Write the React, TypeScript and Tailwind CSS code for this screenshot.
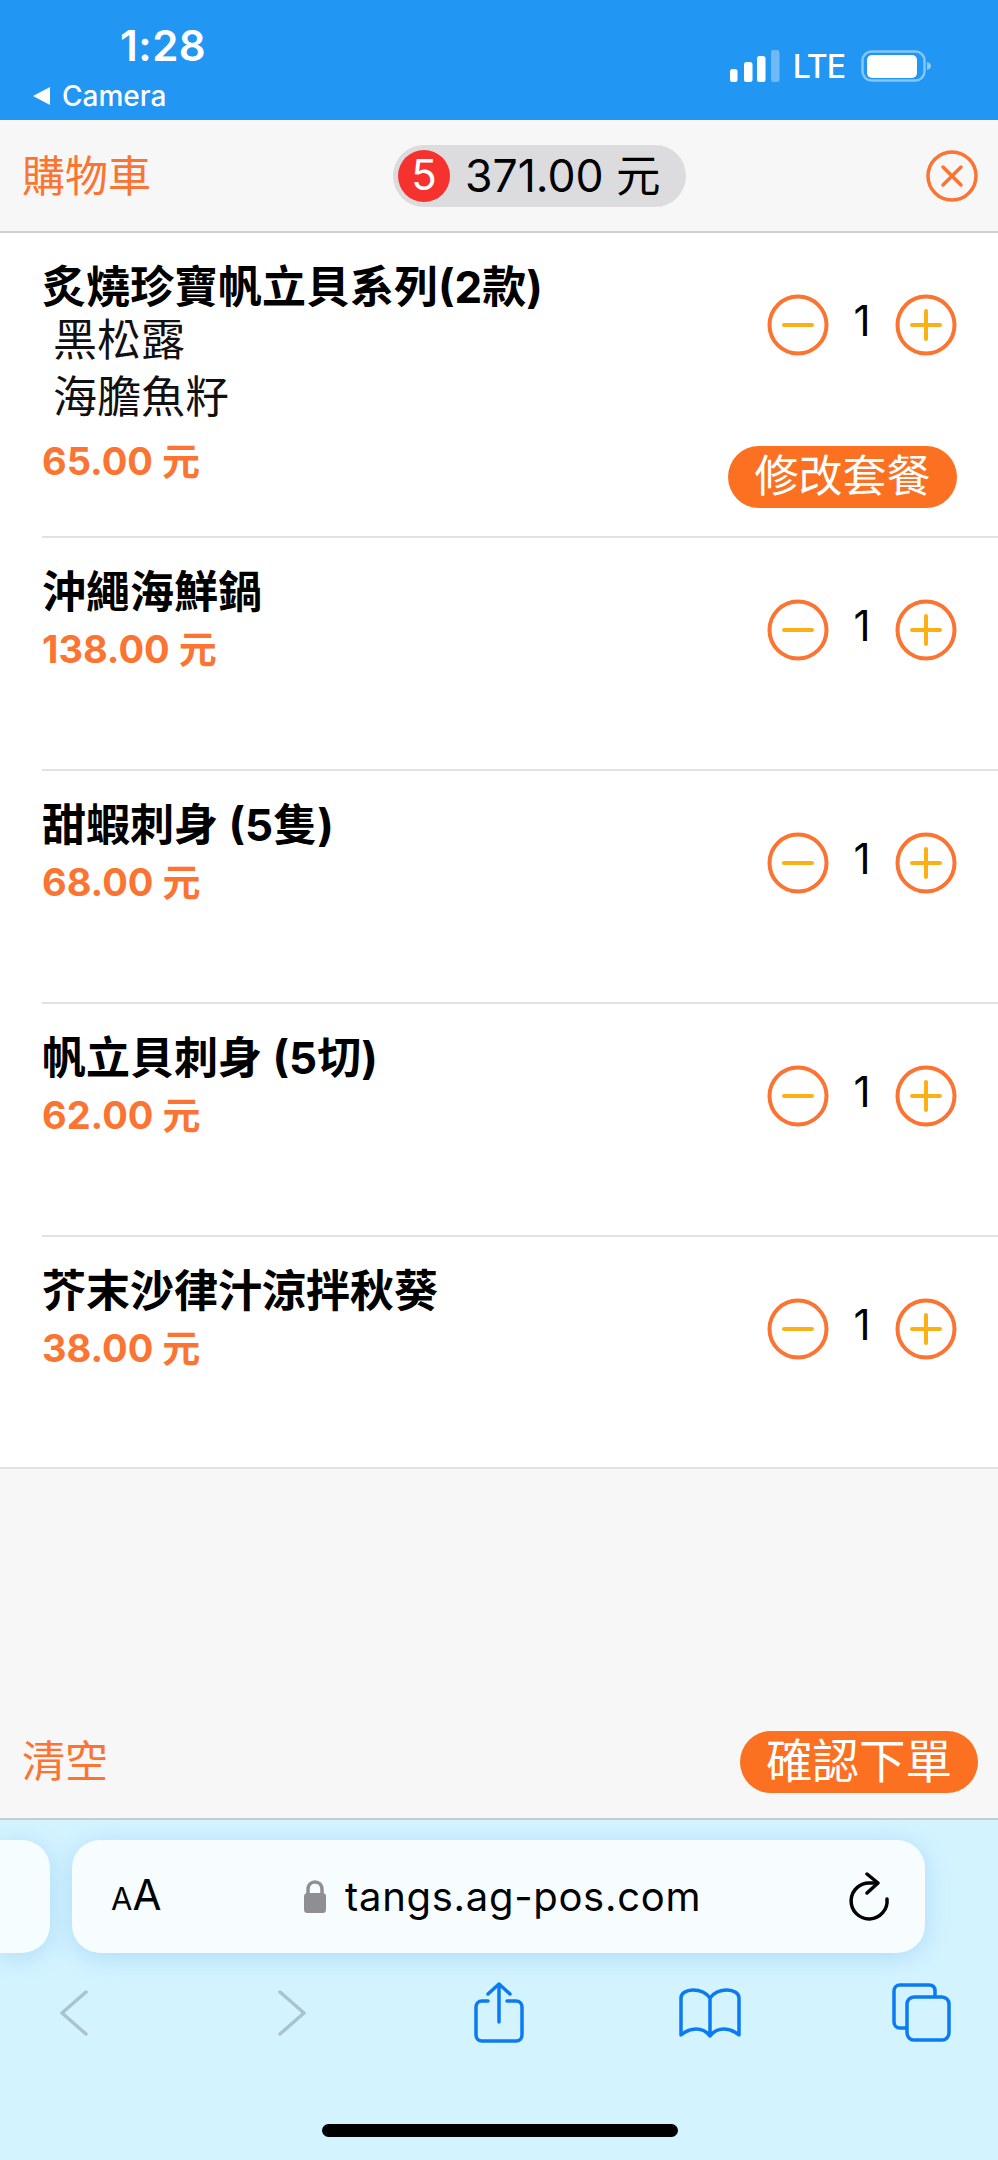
const CJK = "font-['Inter','Noto_Sans_CJK_TC',sans-serif]";

const items = [
  { name: "炙燒珍寶帆立貝系列(2款)", price: "65.00 元", opts: ["黑松露", "海膽魚籽"], h: "h-[305px]" },
  { name: "沖繩海鮮鍋", price: "138.00 元", opts: [], h: "h-[233px]" },
  { name: "甜蝦刺身 (5隻)", price: "68.00 元", opts: [], h: "h-[233px]" },
  { name: "帆立貝刺身 (5切)", price: "62.00 元", opts: [], h: "h-[233px]" },
  { name: "芥末沙律汁涼拌秋葵", price: "38.00 元", opts: [], h: "h-[232px]" },
];

function Round({ plus }: { plus?: boolean }) {
  return (
    <svg width="62" height="62" viewBox="0 0 62 62" fill="none">
      <circle cx="31" cy="31" r="28.5" stroke="#fb7431" strokeWidth="4" />
      <path d={plus ? "M17 31H45M31 17V45" : "M17 31H45"} stroke="#fbb116" strokeWidth="4" strokeLinecap="round" />
    </svg>
  );
}

function Row({ item, last }: { item: (typeof items)[number]; last: boolean }) {
  return (
    <div className={`flex ${item.h} pr-[41px] pt-[29px] border-b-2 border-[#e2e2e2] ${last ? "-ml-[42px] pl-[42px]" : ""}`}>
      <div className="flex-1">
        <div className="text-[44px] leading-[50px] font-bold text-black whitespace-nowrap">{item.name}</div>
        {item.opts.map((o) => (
          <div key={o} className="pl-[11px] text-[44px] leading-[57px] text-[#111]">{o}</div>
        ))}
        <div className={`text-[38px] leading-[50px] font-bold text-[#fb7431] ${item.opts.length ? "mt-[10px]" : "mt-[7px]"}`}>{item.price}</div>
      </div>
      <div className="flex flex-col items-end">
        <div className="flex items-center mt-[32px]">
          <Round />
          <div className="w-[66px] text-center text-[42px] leading-[50px] -mt-[9px] text-black">1</div>
          <Round plus />
        </div>
        {item.opts.length > 0 && (
          <div className="mt-[90px] h-[62px] w-[229px] rounded-full bg-[#fb7021] text-white text-[44px] leading-[60px] text-center">修改套餐</div>
        )}
      </div>
    </div>
  );
}

export default function App() {
  return (
    <div className={`w-[998px] h-[2160px] flex flex-col overflow-hidden bg-[#f7f7f8] ${CJK}`}>
      <div className="h-[120px] bg-[#2196f3] flex justify-between text-white">
        <div className="pl-[32px] flex flex-col">
          <div className="pl-[88px] pt-[21px] text-[42px] leading-[50px] font-semibold tracking-[0.5px]">1:28</div>
          <div className="flex items-center gap-[11px] mt-[9px] text-[28px] leading-[32px] font-medium">
            <svg width="19" height="20" viewBox="0 0 19 20"><path d="M18 1V19L1 10Z" fill="white" /></svg>
            Camera
          </div>
        </div>
        <div className="flex items-end gap-[12px] pr-[67px] pb-[38px]">
          <svg width="50" height="32" viewBox="0 0 50 32">
            <rect x="0" y="19" width="7.500" height="13" rx="2.500" fill="white" />
            <rect x="14" y="12" width="8.500" height="20" rx="2.500" fill="white" />
            <rect x="27" y="6" width="8.500" height="26" rx="2.500" fill="white" />
            <rect x="41" y="0" width="8.500" height="32" rx="2.500" fill="white" fillOpacity="0.35" />
          </svg>
          <div className="text-[32px] leading-[30px] font-medium tracking-[-1px] ml-[1px]">LTE</div>
          <svg width="70" height="32" viewBox="0 0 70 32" className="ml-[4px]">
            <rect x="1.500" y="1.500" width="62" height="29" rx="9" stroke="white" strokeOpacity="0.45" strokeWidth="2.500" fill="none" />
            <rect x="6" y="5" width="50" height="23" rx="5" fill="white" />
            <path d="M66 12C69 13 70 14.500 70 16C70 17.500 69 19 66 20Z" fill="white" fillOpacity="0.5" />
          </svg>
        </div>
      </div>

      <div className="h-[113px] flex items-center pl-[22px] pr-[20px] border-b-2 border-[#cfcfcf]">
        <div className="w-[371px] text-[43px] leading-[50px] text-[#fb7431]">購物車</div>
        <div className="w-[293px] h-[62px] rounded-full bg-[#dcdcde] flex items-center pl-[5px] gap-[15px]">
          <div className="w-[52px] h-[52px] rounded-full bg-[#f6322e] text-white text-[42px] leading-[50px] text-center">5</div>
          <div className="text-[44.500px] leading-[50px] text-black">371.00 元</div>
        </div>
        <div className="flex-1 flex justify-end">
          <svg width="52" height="52" viewBox="0 0 52 52" fill="none">
            <circle cx="26" cy="26" r="24" stroke="#fb7431" strokeWidth="3.500" />
            <path d="M17 17L35 35M35 17L17 35" stroke="#fb7431" strokeWidth="3.500" strokeLinecap="round" />
          </svg>
        </div>
      </div>

      <div className="bg-white pl-[42px]">
        {items.map((it, i) => (
          <Row key={it.name} item={it} last={i === items.length - 1} />
        ))}
      </div>

      <div className="flex-1 flex items-end justify-between pl-[22px] pr-[20px] pb-[25px]">
        <div className="text-[43px] leading-[64px] text-[#fb7431]">清空</div>
        <div className="w-[238px] h-[62px] rounded-full bg-[#fb7021] text-white text-[46.500px] leading-[60px] text-center">確認下單</div>
      </div>

      <div className="h-[342px] shrink-0 border-t-2 border-[#c4cdd2] bg-[#d3f3ff] flex flex-col">
        <div className="flex gap-[22px] mt-[20px] h-[113px]">
          <div className="w-[50px] rounded-r-[28px] bg-[#f6fdff] shadow-[0_4px_24px_rgba(70,150,230,0.25)]" />
          <div className="w-[853px] rounded-[28px] bg-[#f7fdff] shadow-[0_4px_24px_rgba(70,150,230,0.25)] flex items-center pl-[39px] pr-[34px] text-black">
            <div className="w-[194px] leading-[44px] flex items-baseline">
              <span className="text-[31px]">A</span>
              <span className="text-[42px]">A</span>
            </div>
            <svg width="24" height="34" viewBox="0 0 24 34" className="ml-[-2px]">
              <path d="M5 15V9.500C5 5 8 2 12 2S19 5 19 9.500V15" stroke="#8e8e93" strokeWidth="3.500" fill="none" />
              <rect x="1" y="13" width="22" height="20" rx="3.500" fill="#8e8e93" />
            </svg>
            <div className="ml-[18px] flex-1 text-[40px] leading-[50px] tracking-[0.7px]">tangs.ag-pos.com</div>
            <svg width="42" height="50" viewBox="0 0 42 50" fill="none" stroke="black" strokeWidth="3.500" strokeLinecap="round" strokeLinejoin="round">
              <path d="M38 27A18 18 0 1 1 22 11H28" />
              <path d="M18 2L29 11L18 21" />
            </svg>
          </div>
        </div>
        <div className="flex items-center h-[62px] mt-[28px] pl-[60px]">
          <svg width="28" height="46" viewBox="0 0 28 46" fill="none" stroke="#a9c3cf" strokeWidth="3.500" strokeLinecap="round" strokeLinejoin="round" className="mt-[2px]"><path d="M26 2L2 23L26 44" /></svg>
          <svg width="28" height="46" viewBox="0 0 28 46" fill="none" stroke="#a9c3cf" strokeWidth="3.500" strokeLinecap="round" strokeLinejoin="round" className="mt-[2px] ml-[190px]"><path d="M2 2L26 23L2 44" /></svg>
          <svg width="50" height="62" viewBox="0 0 50 62" fill="none" stroke="#0a7bf2" strokeWidth="3.500" strokeLinecap="round" strokeLinejoin="round" className="ml-[168px]">
            <path d="M14 20H8C4.500 20 2 22.500 2 26V54C2 57.500 4.500 60 8 60H42C45.500 60 48 57.500 48 54V26C48 22.500 45.500 20 42 20H33" />
            <path d="M25 41V3M14 13L25 3L36 13" />
          </svg>
          <svg width="62" height="52" viewBox="0 0 62 52" fill="none" stroke="#0a7bf2" strokeWidth="3.500" strokeLinecap="round" strokeLinejoin="round" className="mt-[4px] ml-[155px]">
            <path d="M31 10C27 4.500 21 2 14 2C7 2 2 5.500 2 10V47C7 43 12 41 17 41C23 41 28 44 31 48C34 44 39 41 45 41C50 41 55 43 60 47V10C60 5.500 55 2 48 2C41 2 35 4.500 31 10ZM31 10V48" />
          </svg>
          <svg width="60" height="60" viewBox="0 0 60 60" fill="none" stroke="#0a7bf2" strokeWidth="3.500" strokeLinejoin="round" className="ml-[150px]">
            <path d="M44 14V9C44 5 41.500 3 38 3H9C5.500 3 3 5.500 3 9V40C3 43.500 5.500 46 9 46H16" />
            <rect x="16" y="15" width="42" height="43" rx="7" />
          </svg>
        </div>
        <div className="mt-[81px] ml-[322px] w-[356px] h-[13px] rounded-full bg-black" />
      </div>
    </div>
  );
}
